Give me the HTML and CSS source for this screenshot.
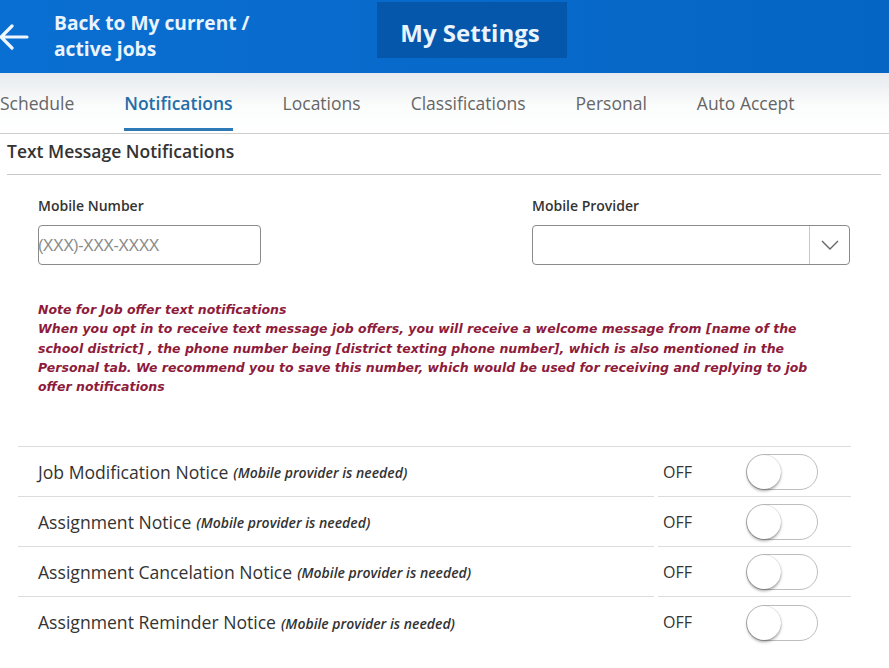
FILE: index.html
```html
<!DOCTYPE html>
<html>
<head>
<meta charset="utf-8">
<link rel="stylesheet" href="styles.css">
</head>
<body>
<header class="topbar">
  <div class="back">
    <svg class="back-arrow" width="32" height="32" viewBox="0 0 32 32"><path d="M29 16H3M14 5L3 16l11 11" fill="none" stroke="#eef6ff" stroke-width="3.2" stroke-linecap="round" stroke-linejoin="round"/></svg>
    <div class="back-text">Back to My current /<br>active jobs</div>
  </div>
  <div class="title-box">My Settings</div>
</header>
<nav class="tabs">
  <span class="tab">Schedule</span>
  <span class="tab active">Notifications</span>
  <span class="tab">Locations</span>
  <span class="tab">Classifications</span>
  <span class="tab">Personal</span>
  <span class="tab">Auto Accept</span>
</nav>
<main class="content">
  <h2 class="section-title">Text Message Notifications</h2>
  <div class="fields">
    <div class="field field-number">
      <label class="field-label">Mobile Number</label>
      <div class="input"><span class="placeholder">(XXX)-XXX-XXXX</span></div>
    </div>
    <div class="field field-provider">
      <label class="field-label">Mobile Provider</label>
      <div class="select">
        <span class="select-value"></span>
        <span class="select-btn"><svg width="20" height="12" viewBox="0 0 20 12"><path d="M2 2l8 8 8-8" fill="none" stroke="#666" stroke-width="1.4"/></svg></span>
      </div>
    </div>
  </div>
  <div class="note">Note for Job offer text notifications<br>When you opt in to receive text message job offers, you will receive a welcome message from [name of the school district] , the phone number being [district texting phone number], which is also mentioned in the Personal tab. We recommend you to save this number, which would be used for receiving and replying to job offer notifications</div>
  <div class="rows">
    <div class="row">
      <div class="row-label">Job Modification Notice <em>(Mobile provider is needed)</em></div>
      <div class="row-state">OFF</div>
      <div class="row-toggle"><span class="toggle"><span class="knob"></span></span></div>
    </div>
    <div class="row">
      <div class="row-label">Assignment Notice <em>(Mobile provider is needed)</em></div>
      <div class="row-state">OFF</div>
      <div class="row-toggle"><span class="toggle"><span class="knob"></span></span></div>
    </div>
    <div class="row">
      <div class="row-label">Assignment Cancelation Notice <em>(Mobile provider is needed)</em></div>
      <div class="row-state">OFF</div>
      <div class="row-toggle"><span class="toggle"><span class="knob"></span></span></div>
    </div>
    <div class="row last">
      <div class="row-label">Assignment Reminder Notice <em>(Mobile provider is needed)</em></div>
      <div class="row-state">OFF</div>
      <div class="row-toggle"><span class="toggle"><span class="knob"></span></span></div>
    </div>
  </div>
</main>
</body>
</html>
```
FILE: styles.css
```css
html, body { margin: 0; padding: 0; background: #fff; }
body { font-family: "Open Sans", "Liberation Sans", sans-serif; color: #333; width: 889px; height: 668px; overflow: hidden; }

.topbar { height: 73px; background: linear-gradient(90deg, #0a6fd2, #0565c4); display: flex; align-items: flex-start; }
.back { width: 377px; display: flex; align-items: center; height: 73px; }
.back-arrow { margin-left: -2px; margin-right: 24px; flex: none; }
.back-text { color: #eaf4ff; font-weight: 700; font-size: 19.2px; line-height: 26px; margin-top: -1px; }
.title-box { margin-top: 2px; height: 56px; width: 190px; box-sizing: border-box; padding-top: 4px; background: #0557ac; color: #eaf4ff; font-weight: 700; font-size: 24px; display: flex; align-items: center; justify-content: center; padding-right: 4px; }

.tabs { height: 60px; border-bottom: 1px solid #cfcfcf; background: linear-gradient(#e6eaee, #fbfcfc 55%, #fff); display: flex; align-items: stretch; margin-left: -25px; padding-left: 0; }
.tab { margin: 0 25px; font-size: 17.5px; color: #666; display: flex; align-items: center; padding-top: 5px; box-sizing: border-box; height: 58px; border-bottom: 3px solid transparent; }
.tab.active { color: #246ea8; font-weight: 600; border-bottom-color: #2c79b6; }

.content { padding: 0 8px 0 7px; }
.section-title { margin: 0; font-size: 17.5px; font-weight: 600; color: #333; height: 40px; line-height: 34px; border-bottom: 1px solid #c9c9c9; }

.fields { display: flex; padding-top: 20px; }
.field { display: flex; flex-direction: column; }
.field-number { margin-left: 31px; width: 223px; }
.field-provider { margin-left: 271px; width: 318px; }
.field-label { font-size: 14px; font-weight: 600; color: #333; line-height: 20px; height: 20px; margin-bottom: 10px; padding-top: 1px; box-sizing: border-box; }
.input { height: 40px; box-sizing: border-box; border: 1px solid #8a8a8a; border-radius: 4px; display: flex; align-items: center; }
.placeholder { font-family: "Liberation Sans", Arial, sans-serif; font-size: 16px; color: #8a8a8a; letter-spacing: -0.5px; margin-left: -1px; padding-top: 1px; }
.select { height: 40px; box-sizing: border-box; border: 1px solid #8a8a8a; border-radius: 4px; display: flex; }
.select-value { flex: 1; }
.select-btn { width: 39px; border-left: 1px solid #c8c8c8; display: flex; align-items: center; justify-content: center; }

.note { margin: 35px 0 0 31px; width: 776px; color: #8e1b3b; font-family: "DejaVu Sans", sans-serif; font-style: italic; font-weight: 600; font-size: 12.5px; line-height: 19.3px; }

.rows { margin: 50px 30px 0 11px; border-top: 1px solid #dcdcdc; }
.row { display: grid; grid-template-columns: 640px 88px 1fr; height: 50px; }
.row > div { border-bottom: 1px solid #dcdcdc; display: flex; align-items: center; box-sizing: border-box; }
.row.last > div { border-bottom: none; }
.row-label { padding-left: 20px; font-size: 17.6px; color: #333; margin-right: 4px; }
.row-label em { font-size: 14px; font-weight: 600; margin-left: 5px; padding-top: 2px; }
.row-state { font-size: 16px; color: #333; padding-left: 5px; }
.toggle { position: relative; width: 70px; height: 34px; border: 1px solid #bdbdbd; border-radius: 18px; background: #fff; display: block; margin-top: 1px; }
.knob { position: absolute; left: 0; top: 0; width: 34px; height: 34px; border-radius: 50%; background: #fff; box-shadow: 0 2px 3px rgba(0,0,0,0.35), 0 0 1px rgba(0,0,0,0.3); }
```
